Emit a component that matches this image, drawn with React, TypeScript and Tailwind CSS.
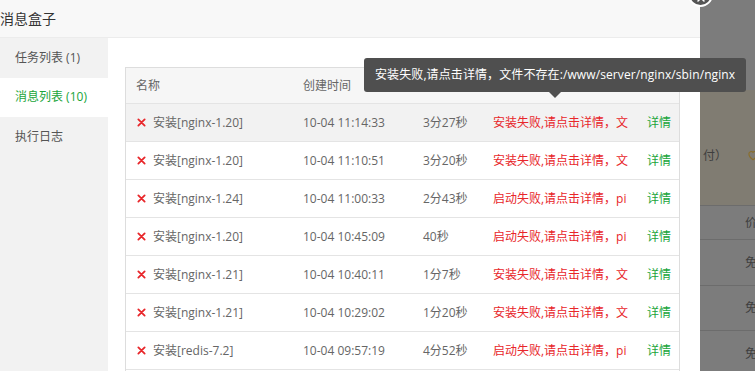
import { X } from 'lucide-react'

type Row = {
    name: string
    time: string
    cost: string
    msg: string
    hover?: boolean
}

// 表格里只露出前半截，完整内容在悬浮提示里
const installMsg = '安装失败,请点击详情，文'
const startMsg = '启动失败,请点击详情，pi'

const rows: Row[] = [
    { name: '安装[nginx-1.20]', time: '10-04 11:14:33', cost: '3分27秒', msg: installMsg, hover: true },
    { name: '安装[nginx-1.20]', time: '10-04 11:10:51', cost: '3分20秒', msg: installMsg },
    { name: '安装[nginx-1.24]', time: '10-04 11:00:33', cost: '2分43秒', msg: startMsg },
    { name: '安装[nginx-1.20]', time: '10-04 10:45:09', cost: '40秒', msg: startMsg },
    { name: '安装[nginx-1.21]', time: '10-04 10:40:11', cost: '1分7秒', msg: installMsg },
    { name: '安装[nginx-1.21]', time: '10-04 10:29:02', cost: '1分20秒', msg: installMsg },
    { name: '安装[redis-7.2]', time: '10-04 09:57:19', cost: '4分52秒', msg: startMsg },
    { name: '安装[nginx-1.22]', time: '10-04 09:40:12', cost: '1分2秒', msg: installMsg },
]

const tabs = [
    { label: '任务列表 (1)', active: false },
    { label: '消息列表 (10)', active: true },
    { label: '执行日志', active: false },
]

function FailIcon() {
    return (
        <svg width="9" height="9" viewBox="0 0 10 10" className="shrink-0">
            <path d="M1.5 1.5 L8.5 8.5 M8.5 1.5 L1.5 8.5" stroke="#e8262a" strokeWidth="2" strokeLinecap="round" />
        </svg>
    )
}

export default function App() {
    return (
        <div
            className="relative w-[755px] h-[371px] overflow-hidden flex bg-[#7c7c7c]"
            style={{ fontFamily: '"Open Sans", "Noto Sans CJK SC", sans-serif' }}
        >
            {/* 弹窗 */}
            <div className="w-[700px] h-full bg-white flex flex-col shrink-0">
                {/* 标题栏 */}
                <div className="h-[38px] shrink-0 bg-[#f8f8f8] border-b border-[#ececec] flex items-center text-[14px] text-[#333]">
                    消息盒子
                </div>

                <div className="flex flex-1 min-h-0">
                    {/* 左侧菜单 */}
                    <div className="w-[108px] shrink-0 bg-[#f2f2f2] flex flex-col">
                        {tabs.map(t => (
                            <div
                                key={t.label}
                                className={`h-[39.5px] flex items-center pl-[15px] text-[12px] ${t.active ? 'bg-white text-[#20a53a]' : 'text-[#555]'}`}
                            >
                                {t.label}
                            </div>
                        ))}
                    </div>

                    {/* 内容 */}
                    <div className="flex-1 pt-[29px] pl-[17px] pr-[20px]">
                        <div className="border border-[#ddd] border-b-0 text-[12px] text-[#666]">
                            {/* 表头 */}
                            <div className="h-[36px] flex items-center bg-[#f6f6f6] border-b border-[#e4e4e4]">
                                <div className="w-[167px] pl-[10px]">名称</div>
                                <div className="w-[120px] pl-[10px]">创建时间</div>
                                <div className="w-[70px] pl-[10px]">耗时</div>
                                <div className="w-[145px] pl-[10px]">消息</div>
                                <div className="flex-1 text-right pr-[8px]">操作</div>
                            </div>

                            {rows.map((r, i) => (
                                <div
                                    key={i}
                                    className={`h-[38px] flex items-center border-b border-[#e4e4e4] ${r.hover ? 'bg-[#f2f2f2]' : 'bg-white'}`}
                                >
                                    <div className="w-[167px] pl-[11px] flex items-center gap-[7px]">
                                        <FailIcon />
                                        <span>{r.name}</span>
                                    </div>
                                    <div className="w-[120px] pl-[10px]">{r.time}</div>
                                    <div className="w-[70px] pl-[10px]">{r.cost}</div>
                                    <div className="w-[145px] pl-[10px] whitespace-nowrap text-[#e8262a]">{r.msg}</div>
                                    <div className="flex-1 text-right pr-[8px] text-[#20a53a]">详情</div>
                                </div>
                            ))}
                        </div>
                    </div>
                </div>
            </div>

            {/* 背景页面（遮罩下） */}
            <div className="flex-1 flex flex-col text-[12px] text-[#3e3e3e]">
                <div className="h-[90px] shrink-0" />
                <div className="h-[115px] shrink-0 bg-[#807c72] flex items-start pt-[57px]">
                    <span className="ml-[3px]">付）</span>
                    <svg width="14" height="14" viewBox="0 0 24 24" className="ml-[19px] mt-[1px] shrink-0">
                        <path d="M12 20s-7-4.4-7-10a4 4 0 0 1 7-2.6A4 4 0 0 1 19 10c0 5.6-7 10-7 10z" fill="none" stroke="#8a6f2c" strokeWidth="2" />
                    </svg>
                </div>
                <div className="h-[35px] shrink-0 border-t border-[#6c6c6c] border-b flex items-center pl-[45px]">价</div>
                <div className="h-[46px] shrink-0 border-b border-[#6c6c6c] flex items-center pl-[45px]">免</div>
                <div className="h-[45px] shrink-0 border-b border-[#6c6c6c] flex items-center pl-[45px]">免</div>
                <div className="h-[45px] shrink-0 flex items-center pl-[45px]">免</div>
            </div>

            {/* 关闭按钮 */}
            <div className="absolute left-[688px] top-[-18px] w-[25px] h-[25px] rounded-full bg-[#555] border-2 border-white flex items-end justify-center pb-[1px]">
                <X size={12} className="text-white" strokeWidth={3} />
            </div>

            {/* 提示框 */}
            <div className="absolute left-[364px] top-[58px] w-[382px] h-[34px] pl-[11px] flex items-center rounded-[3px] bg-[#4f4f4f] text-white text-[12px] whitespace-nowrap tracking-[0.1px]">
                安装失败,请点击详情，文件不存在:/www/server/nginx/sbin/nginx
                <span className="absolute left-[185px] bottom-[-6px] w-0 h-0 border-l-[6px] border-r-[6px] border-t-[6px] border-l-transparent border-r-transparent border-t-[#4f4f4f]" />
            </div>
        </div>
    )
}
